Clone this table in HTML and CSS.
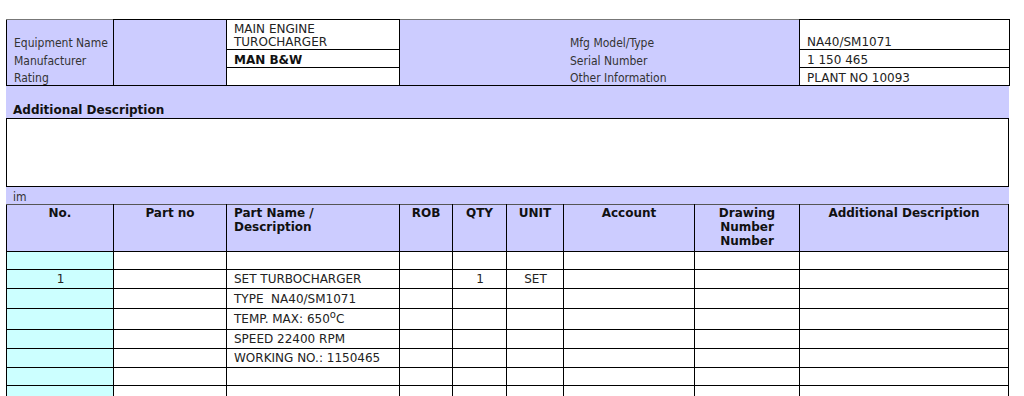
FILE: index.html
```html
<!DOCTYPE html>
<html lang="en">
<head>
<meta charset="utf-8">
<title>Equipment Spare Parts</title>
<link rel="stylesheet" href="styles.css">
</head>
<body>
<div class="sheet">
  <table class="equip">
    <colgroup>
      <col class="c-label"><col class="c-blank"><col class="c-value"><col class="c-label2"><col class="c-value2">
    </colgroup>
    <tr class="e-r1">
      <td class="lbl lbl-top">Equipment Name</td>
      <td class="lbl-fill" rowspan="3"></td>
      <td class="val">MAIN ENGINE<br>TUROCHARGER</td>
      <td class="lbl2 lbl-top">Mfg Model/Type</td>
      <td class="val">NA40/SM1071</td>
    </tr>
    <tr class="e-r2">
      <td class="lbl lbl-mid">Manufacturer</td>
      <td class="val"><b>MAN B&amp;W</b></td>
      <td class="lbl2 lbl-mid">Serial Number</td>
      <td class="val">1 150 465</td>
    </tr>
    <tr class="e-r3">
      <td class="lbl lbl-bot">Rating</td>
      <td class="val"></td>
      <td class="lbl2 lbl-bot">Other Information</td>
      <td class="val">PLANT NO 10093</td>
    </tr>
  </table>

  <div class="band band-title">Additional Description</div>
  <div class="desc-box"></div>
  <div class="band band-small">im</div>

  <table class="parts">
    <colgroup>
      <col class="p-no"><col class="p-part"><col class="p-name"><col class="p-rob"><col class="p-qty"><col class="p-unit"><col class="p-acc"><col class="p-draw"><col class="p-add">
    </colgroup>
    <tr class="head">
      <th>No.</th>
      <th>Part no</th>
      <th class="left">Part Name /<br>Description</th>
      <th>ROB</th>
      <th>QTY</th>
      <th>UNIT</th>
      <th>Account</th>
      <th>Drawing<br>Number<br>Number</th>
      <th>Additional Description</th>
    </tr>
    <tr class="h18"><td class="no"></td><td></td><td class="name"></td><td></td><td></td><td></td><td></td><td></td><td></td></tr>
    <tr class="h19"><td class="no">1</td><td></td><td class="name">SET TURBOCHARGER</td><td></td><td class="ctr">1</td><td class="ctr">SET</td><td></td><td></td><td></td></tr>
    <tr class="h20"><td class="no"></td><td></td><td class="name">TYPE&nbsp; NA40/SM1071</td><td></td><td></td><td></td><td></td><td></td><td></td></tr>
    <tr class="h21"><td class="no"></td><td></td><td class="name temp">TEMP. MAX: 650<sup>o</sup>C</td><td></td><td></td><td></td><td></td><td></td><td></td></tr>
    <tr class="h19"><td class="no"></td><td></td><td class="name">SPEED 22400 RPM</td><td></td><td></td><td></td><td></td><td></td><td></td></tr>
    <tr class="h19"><td class="no"></td><td></td><td class="name">WORKING NO.: 1150465</td><td></td><td></td><td></td><td></td><td></td><td></td></tr>
    <tr class="h18"><td class="no"></td><td></td><td class="name"></td><td></td><td></td><td></td><td></td><td></td><td></td></tr>
    <tr class="h18"><td class="no"></td><td></td><td class="name"></td><td></td><td></td><td></td><td></td><td></td><td></td></tr>
  </table>
</div>
</body>
</html>
```

FILE: styles.css
```css
html, body {
  margin: 0;
  padding: 0;
  background: #ffffff;
}

body {
  font-family: "DejaVu Sans", Verdana, sans-serif;
  font-size: 12px;
  line-height: 14px;
  color: #222222;
  overflow: hidden;
}

.sheet {
  width: 1003px;
  margin: 19px 0 0 6px;
}

/* ---------- equipment header table ---------- */
.equip {
  width: 1003px;
  border-collapse: collapse;
  table-layout: fixed;
  border-top: 1px solid #777777;
}

.c-label { width: 107px; }
.c-blank { width: 113px; }
.c-value { width: 173px; }
.c-label2 { width: 400px; }
.c-value2 { width: 210px; }

.equip td {
  padding: 0 6px 0 7px;
  line-height: 13px;
  vertical-align: bottom;
  white-space: nowrap;
}

.e-r1 td { height: 29px; }
.e-r2 td { height: 17px; }
.e-r3 td { height: 17px; }

.lbl, .lbl2, .lbl-fill {
  background: #ccccff;
  color: #333333;
}

.lbl, .lbl2 {
  font-family: "DejaVu Sans Condensed", "DejaVu Sans", sans-serif;
  font-stretch: condensed;
  border-left: 1px solid #000;
  border-right: 1px solid #000;
}

.lbl-fill {
  border: 1px solid #000;
}

.lbl2 {
  padding-left: 170px !important;
}

.lbl-top { border-top: 1px solid #777777; }
.lbl-bot { border-bottom: 1px solid #000; }

.val {
  background: #ffffff;
  border: 1px solid #000;
  color: #222222;
}

.val b {
  color: #111111;
}

/* ---------- bands ---------- */
.band {
  background: #ccccff;
  padding-left: 7px;
}

.band-title {
  height: 14px;
  padding-top: 17px;
  padding-bottom: 1px;
  font-weight: bold;
  color: #111111;
}

.band-small {
  height: 14px;
  padding-top: 3px;
  color: #333333;
  font-family: "DejaVu Sans Condensed", "DejaVu Sans", sans-serif;
}

.desc-box {
  height: 67px;
  border: 1px solid #000;
  background: #ffffff;
}

/* ---------- parts table ---------- */
.parts {
  width: 1002px;
  border-collapse: collapse;
  table-layout: fixed;
}

.p-no { width: 107px; }
.p-part { width: 113px; }
.p-name { width: 173px; }
.p-rob { width: 53px; }
.p-qty { width: 54px; }
.p-unit { width: 57px; }
.p-acc { width: 131px; }
.p-draw { width: 105px; }
.p-add { width: 209px; }

.parts th {
  background: #ccccff;
  border: 1px solid #000;
  border-top: 1px solid #555555;
  height: 45px;
  padding: 1px 4px 0;
  vertical-align: top;
  font-weight: bold;
  color: #111111;
  text-align: center;
}

.parts th.left {
  text-align: left;
  padding-left: 7px;
}

.parts td {
  border: 1px solid #000;
  padding: 0 6px 0 7px;
  vertical-align: middle;
  white-space: nowrap;
  background: #ffffff;
}

.parts td.no {
  background: #ccffff;
  text-align: center;
}

.parts td.ctr {
  text-align: center;
}

.h18 td { height: 17px; }
.h19 td { height: 18px; }
.h20 td { height: 19px; }
.h21 td { height: 20px; }

.temp sup {
  font-size: 10px;
  line-height: 0;
  vertical-align: 5px;
}
```
